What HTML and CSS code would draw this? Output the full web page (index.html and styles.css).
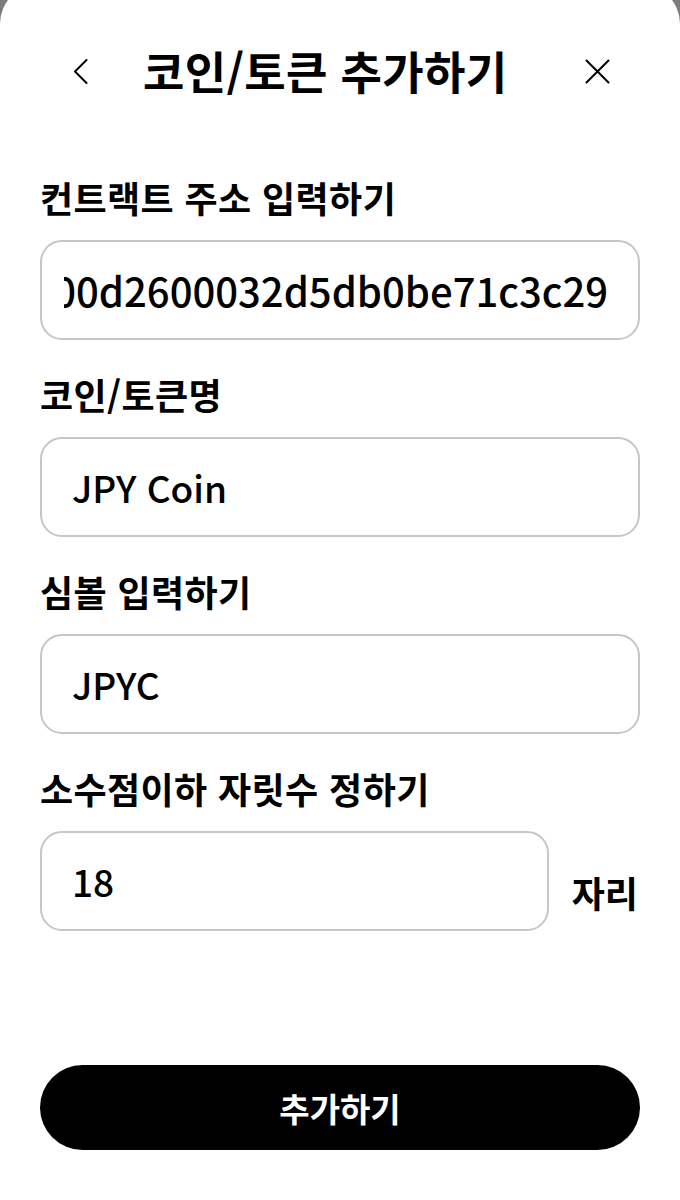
FILE: index.html
```html
<!DOCTYPE html>
<html lang="ko">
<head>
<meta charset="utf-8">
<title>코인/토큰 추가하기</title>
<link rel="stylesheet" href="styles.css">
</head>
<body>
<div class="sheet">
  <header class="header">
    <button class="icon-btn back" aria-label="뒤로">
      <svg width="15" height="25" viewBox="0 0 15 25"><path d="M13.5 1 L2 12.5 L13.5 24" fill="none" stroke="#000" stroke-width="2" stroke-linecap="round" stroke-linejoin="round"/></svg>
    </button>
    <h1 class="title">코인/토큰 추가하기</h1>
    <button class="icon-btn close" aria-label="닫기">
      <svg width="25" height="25" viewBox="0 0 25 25"><path d="M1.5 1.5 L23.5 23.5 M23.5 1.5 L1.5 23.5" fill="none" stroke="#000" stroke-width="2" stroke-linecap="round"/></svg>
    </button>
  </header>

  <div class="field">
    <div class="label">컨트랙트 주소 입력하기</div>
    <div class="box">
      <div class="value value-end"><span>0x2f6c1a9e4b7d8f3100d2600032d5db0be71c3c29</span></div>
    </div>
  </div>

  <div class="field">
    <div class="label">코인/토큰명</div>
    <div class="box"><div class="value">JPY Coin</div></div>
  </div>

  <div class="field">
    <div class="label">심볼 입력하기</div>
    <div class="box"><div class="value">JPYC</div></div>
  </div>

  <div class="field">
    <div class="label">소수점이하 자릿수 정하기</div>
    <div class="row">
      <div class="box box-grow"><div class="value">18</div></div>
      <div class="unit">자리</div>
    </div>
  </div>

  <button class="submit">추가하기</button>
</div>
</body>
</html>
```

FILE: styles.css
```css
* { box-sizing: border-box; }

html, body {
  margin: 0;
  padding: 0;
}

body {
  background: #7d7d7d;
  font-family: "Noto Sans CJK KR", "Noto Sans", sans-serif;
  color: #000;
  overflow: hidden;
}

.sheet {
  margin-top: -16px;
  height: 1216px;
  background: #fff;
  border-radius: 40px 40px 0 0;
  padding: 16px 40px 50px;
  display: flex;
  flex-direction: column;
}

.header {
  height: 142px;
  display: flex;
  align-items: center;
  padding: 0 30px 0 33px;
}

.icon-btn {
  background: none;
  border: 0;
  padding: 0;
  display: flex;
  align-items: center;
  justify-content: center;
  cursor: pointer;
}

.title {
  margin: 0 0 0 55px;
  font-size: 45px;
  font-weight: 700;
  line-height: 56px;
  letter-spacing: 0.3px;
}

.close {
  margin-left: auto;
}

.field {
  display: flex;
  flex-direction: column;
  margin-bottom: 32px;
}

.field:first-of-type {
  margin-top: 33px;
}

.label {
  font-size: 36px;
  font-weight: 700;
  line-height: 44px;
  letter-spacing: 0.4px;
  margin-bottom: 21px;
}

.box {
  height: 100px;
  border: 2px solid #c6c6c6;
  border-radius: 22px;
  padding: 0 30px;
  display: flex;
  align-items: center;
}

.value {
  font-size: 37px;
  font-weight: 500;
  line-height: 58px;
  white-space: nowrap;
  width: 100%;
}

.value-end {
  display: flex;
  justify-content: flex-end;
  overflow: hidden;
  margin-left: -8px;
  width: calc(100% + 8px);
  font-size: 40px;
  line-height: 62px;
}

.value-end span {
  flex: none;
}

.row {
  display: flex;
  gap: 23px;
}

.box-grow {
  flex: 1;
}

.unit {
  align-self: flex-end;
  font-size: 36px;
  font-weight: 700;
  line-height: 44px;
  margin-bottom: 17px;
  margin-right: 2px;
}

.submit {
  margin-top: auto;
  height: 85px;
  width: 100%;
  border: 0;
  border-radius: 43px;
  background: #000;
  color: #fff;
  font-family: inherit;
  font-size: 33px;
  font-weight: 700;
  cursor: pointer;
}
```
